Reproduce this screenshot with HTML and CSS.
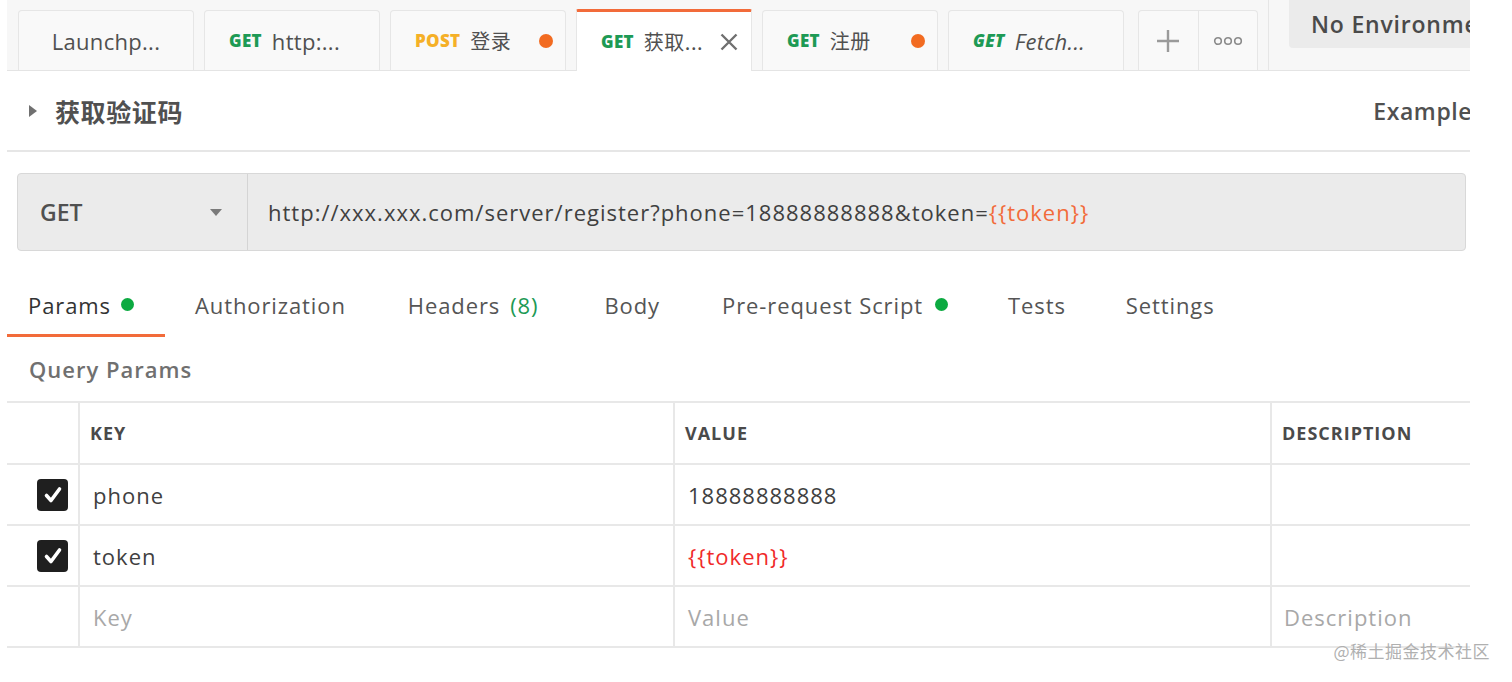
FILE: index.html
```html
<!DOCTYPE html>
<html lang="zh">
<head>
<meta charset="utf-8">
<title>Postman</title>
<link rel="stylesheet" href="styles.css">
</head>
<body>
<div class="app">
  <div class="tabbar">
    <div class="tab tab-center"><span class="tab-name">Launchp...</span></div>
    <div class="tab"><span class="m get">GET</span><span class="tab-name">http:...</span></div>
    <div class="tab"><span class="m post">POST</span><span class="tab-name cjk">登录</span><span class="dot"></span></div>
    <div class="tab active"><span class="m get">GET</span><span class="tab-name cjk">获取...</span>
      <svg class="close" width="20" height="20" viewBox="0 0 20 20"><path d="M2.5 2.5 L17.5 17.5 M17.5 2.5 L2.5 17.5" stroke="#707070" stroke-width="2.4" fill="none"/></svg>
    </div>
    <div class="tab"><span class="m get">GET</span><span class="tab-name cjk">注册</span><span class="dot"></span></div>
    <div class="tab italic"><span class="m get">GET</span><span class="tab-name">Fetch...</span></div>
    <div class="tab-tools">
      <div class="tool">
        <svg width="24" height="24" viewBox="0 0 24 24"><path d="M12 1 V23 M1 12 H23" stroke="#9a9a9a" stroke-width="2.4" fill="none"/></svg>
      </div>
      <div class="tool">
        <svg width="30" height="10" viewBox="0 0 30 10"><circle cx="5" cy="5" r="3.3" stroke="#8a8a8a" stroke-width="1.6" fill="none"/><circle cx="15" cy="5" r="3.3" stroke="#8a8a8a" stroke-width="1.6" fill="none"/><circle cx="25" cy="5" r="3.3" stroke="#8a8a8a" stroke-width="1.6" fill="none"/></svg>
      </div>
    </div>
    <div class="vsep"></div>
    <div class="env">No Environment</div>
  </div>

  <div class="title-row">
    <div class="title-left">
      <svg class="caret" width="10" height="14" viewBox="0 0 10 14"><path d="M1 1 L9 7 L1 13 Z" fill="#707070"/></svg>
      <span class="title cjk">获取验证码</span>
    </div>
    <span class="examples">Examples</span>
  </div>

  <div class="url-row">
    <div class="method">
      <span>GET</span>
      <svg width="14" height="9" viewBox="0 0 14 9"><path d="M1 1 L13 1 L7 8 Z" fill="#7a7a7a"/></svg>
    </div>
    <div class="url">http://xxx.xxx.com/server/register?phone=18888888888&amp;token=<span class="var">{{token}}</span></div>
  </div>

  <div class="req-tabs">
    <div class="rtab first active">Params <span class="gdot"></span></div>
    <div class="rtab">Authorization</div>
    <div class="rtab headers">Headers <span class="count">(8)</span></div>
    <div class="rtab body-tab">Body</div>
    <div class="rtab">Pre-request Script <span class="gdot wide"></span></div>
    <div class="rtab">Tests</div>
    <div class="rtab">Settings</div>
  </div>

  <div class="section-title">Query Params</div>

  <div class="table">
    <div class="row head">
      <div class="cell chk"></div>
      <div class="cell key">KEY</div>
      <div class="cell val">VALUE</div>
      <div class="cell desc">DESCRIPTION</div>
    </div>
    <div class="row">
      <div class="cell chk"><span class="box"><svg width="22" height="22" viewBox="0 0 22 22"><path d="M4.5 11.5 L9 16.5 L17.5 5" stroke="#fff" stroke-width="3.6" fill="none" stroke-linecap="round" stroke-linejoin="round"/></svg></span></div>
      <div class="cell key">phone</div>
      <div class="cell val">18888888888</div>
      <div class="cell desc"></div>
    </div>
    <div class="row">
      <div class="cell chk"><span class="box"><svg width="22" height="22" viewBox="0 0 22 22"><path d="M4.5 11.5 L9 16.5 L17.5 5" stroke="#fff" stroke-width="3.6" fill="none" stroke-linecap="round" stroke-linejoin="round"/></svg></span></div>
      <div class="cell key">token</div>
      <div class="cell val red">{{token}}</div>
      <div class="cell desc"></div>
    </div>
    <div class="row">
      <div class="cell chk"></div>
      <div class="cell key ph">Key</div>
      <div class="cell val ph">Value</div>
      <div class="cell desc ph">Description</div>
    </div>
  </div>
</div>
<div class="watermark">@稀土掘金技术社区</div>
</body>
</html>
```

FILE: styles.css
```css
* { box-sizing: border-box; }
html, body { margin: 0; padding: 0; background: #fff; }
body {
  font-family: "Open Sans", "Noto Sans CJK SC", sans-serif;
  color: #505050;
  width: 1512px;
  height: 682px;
  overflow: hidden;
  position: relative;
}
.cjk { font-family: "Noto Sans CJK SC", "Open Sans", sans-serif; }
.app {
  width: 1463px;
  margin-left: 7px;
  overflow: hidden;
}

/* top tab bar */
.tabbar {
  height: 71px;
  background: #f7f7f7;
  border-bottom: 1px solid #e4e4e4;
  display: flex;
  align-items: flex-end;
  padding-left: 11px;
}
.tab {
  width: 176px;
  height: 60px;
  margin-right: 10px;
  background: #f9f9f9;
  border: 1px solid #e6e6e6;
  border-bottom: none;
  border-radius: 4px 4px 0 0;
  display: flex;
  align-items: center;
  padding: 0 12px 0 24px;
  font-size: 22px;
  letter-spacing: 0.3px;
  color: #505050;
  white-space: nowrap;
}
.tab-center { justify-content: center; padding: 0; }
.tab.active {
  background: #fff;
  border-top: 3px solid #f26b3a;
  height: 62px;
  margin-bottom: -1px;
  border-radius: 2px 2px 0 0;
}
.tab.italic { font-style: italic; }
.m {
  font-weight: 800;
  font-size: 17px;
  margin-right: 10px;
  letter-spacing: 0.3px;
}
.get { color: #1d9a55; }
.post { color: #f5b027; }
.tab-name { flex: 0 0 auto; }
.tab-name.cjk { font-size: 20px; letter-spacing: 0.5px; }
.dot {
  width: 14px;
  height: 14px;
  border-radius: 50%;
  background: #f26b21;
  margin-left: auto;
  margin-right: 0;
}
.close { margin-left: auto; }
.tab-tools {
  margin-left: 4px;
  width: 120px;
  height: 60px;
  display: flex;
  border: 1px solid #e6e6e6;
  border-bottom: none;
  border-radius: 4px 4px 0 0;
  background: #f9f9f9;
}
.tool {
  flex: 1;
  display: flex;
  align-items: center;
  justify-content: center;
}
.tool + .tool { border-left: 1px solid #e6e6e6; }
.vsep {
  align-self: stretch;
  width: 1px;
  background: #e6e6e6;
  margin-left: 10px;
}
.env {
  align-self: flex-start;
  margin-left: 20px;
  height: 48px;
  flex: 1;
  background: #ebebeb;
  border-radius: 0 0 0 4px;
  padding-left: 22px;
  display: flex;
  align-items: center;
  font-size: 23px;
  letter-spacing: 0.8px;
  font-weight: 600;
  color: #4a4a4a;
  white-space: nowrap;
  overflow: hidden;
}

/* title row */
.title-row {
  height: 81px;
  border-bottom: 2px solid #e6e6e6;
  display: flex;
  align-items: center;
  justify-content: space-between;
  padding-left: 21px;
  white-space: nowrap;
}
.title-left { display: flex; align-items: center; }
.caret { margin-right: 17px; margin-top: 1px; }
.title {
  font-size: 25px;
  letter-spacing: 0.6px;
  font-weight: 700;
  color: #505050;
}
.examples {
  font-size: 23px;
  letter-spacing: 0.6px;
  font-weight: 600;
  color: #505050;
  margin-right: -14px;
}

/* url row */
.url-row {
  margin: 21px 0 0 10px;
  width: 1449px;
  height: 78px;
  background: #ebebeb;
  border: 1px solid #d8d8d8;
  border-radius: 4px;
  display: flex;
  align-items: stretch;
}
.method {
  width: 230px;
  border-right: 1px solid #d4d4d4;
  display: flex;
  align-items: center;
  justify-content: space-between;
  padding: 0 24px 0 22px;
  font-size: 23px;
  font-weight: 600;
  color: #505050;
}
.url {
  display: flex;
  align-items: center;
  padding-left: 20px;
  font-size: 22px;
  letter-spacing: 1px;
  color: #404040;
  white-space: nowrap;
}
.var { color: #f26b3a; }

/* request tabs */
.req-tabs {
  margin-top: 29px;
  height: 57px;
  display: flex;
  align-items: stretch;
}
.rtab {
  padding: 0 30px;
  display: flex;
  align-items: center;
  font-size: 22px;
  letter-spacing: 0.9px;
  color: #555;
  white-space: nowrap;
  border-bottom: 3px solid transparent;
  padding-bottom: 5px;
}
.rtab.first { padding-left: 21px; padding-right: 31px; }
.rtab.headers { padding-left: 32px; padding-right: 36px; }
.rtab.body-tab { padding-right: 32px; }
.rtab.active { border-bottom-color: #f26b3a; color: #333; }
.gdot {
  display: inline-block;
  width: 13px;
  height: 13px;
  border-radius: 50%;
  background: #0caa41;
  margin-left: 10px;
}
.gdot.wide { margin-left: 12px; }
.count { color: #1d9a55; margin-left: 10px; }

.section-title {
  height: 64px;
  display: flex;
  align-items: center;
  padding-left: 22px;
  font-size: 22px;
  letter-spacing: 1px;
  font-weight: 600;
  color: #707070;
}

/* table */
.table {
  border-top: 2px solid #e8e8e8;
}
.row {
  display: grid;
  grid-template-columns: 71px 595px 597px 1fr;
  height: 61px;
  border-bottom: 2px solid #e8e8e8;
}
.row.head { height: 62px; }
.cell {
  display: flex;
  align-items: center;
  font-size: 22px;
  letter-spacing: 1px;
  color: #404040;
  white-space: nowrap;
  overflow: hidden;
}
.cell + .cell { border-left: 2px solid #e8e8e8; }
.key { padding-left: 13px; }
.val { padding-left: 13px; }
.desc { padding-left: 12px; }
.head .cell {
  font-size: 18px;
  letter-spacing: 1px;
  font-weight: 700;
  color: #4a4a4a;
  padding-left: 10px;
}
.chk { padding-left: 30px; }
.box {
  width: 31px;
  height: 32px;
  border-radius: 4px;
  background: #1f1f1f;
  display: flex;
  align-items: center;
  justify-content: center;
}
.red { color: #f02a2a; }
.ph { color: #a8a8a8; }

.watermark {
  position: absolute;
  right: 22px;
  top: 638px;
  font-family: "Noto Sans CJK SC", sans-serif;
  font-size: 17px;
  color: #b0b0b0;
  letter-spacing: 0.5px;
}
```
